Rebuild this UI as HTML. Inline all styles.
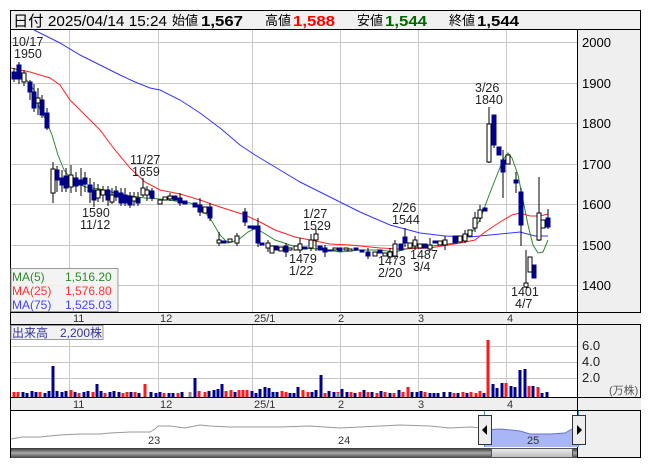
<!DOCTYPE html>
<html><head><meta charset="utf-8"><style>
body{margin:0;background:#fff;width:653px;height:470px;overflow:hidden;font-family:"Liberation Sans","Noto Sans CJK JP",sans-serif}
svg{position:absolute;left:0;top:0}
text{font-family:"Liberation Sans","Noto Sans CJK JP",sans-serif}
</style></head><body>
<svg width="653" height="470" viewBox="0 0 653 470" xmlns="http://www.w3.org/2000/svg">
<!-- header -->
<rect x="10.5" y="10.5" width="630" height="19" fill="#f0f0f0" stroke="#000"/>
<g font-size="15" fill="#000">
<text x="13" y="26" textLength="154" lengthAdjust="spacingAndGlyphs">日付 2025/04/14 15:24</text>
<text x="172" y="25" font-size="13" textLength="26" lengthAdjust="spacingAndGlyphs">始値</text><text x="201" y="26" font-weight="bold" textLength="42" lengthAdjust="spacingAndGlyphs">1,567</text>
<text x="265" y="25" font-size="13" textLength="26" lengthAdjust="spacingAndGlyphs">高値</text><text x="293" y="26" font-weight="bold" fill="#ff0000" textLength="42" lengthAdjust="spacingAndGlyphs">1,588</text>
<text x="357" y="25" font-size="13" textLength="26" lengthAdjust="spacingAndGlyphs">安値</text><text x="385" y="26" font-weight="bold" fill="#006600" textLength="42" lengthAdjust="spacingAndGlyphs">1,544</text>
<text x="449" y="25" font-size="13" textLength="26" lengthAdjust="spacingAndGlyphs">終値</text><text x="477" y="26" font-weight="bold" textLength="42" lengthAdjust="spacingAndGlyphs">1,544</text>
</g>
<!-- main panel -->
<rect x="10.5" y="29.5" width="630" height="428" fill="#fff" stroke="#000"/>
<rect x="578" y="30" width="62" height="427" fill="#efefef"/>
<line x1="577.5" y1="30" x2="577.5" y2="458" stroke="#000"/>
<g stroke="#c8c8c8" stroke-width="1">
<line x1="11" y1="42.5" x2="577" y2="42.5"/><line x1="11" y1="83.5" x2="577" y2="83.5"/><line x1="11" y1="123.5" x2="577" y2="123.5"/><line x1="11" y1="164.5" x2="577" y2="164.5"/><line x1="11" y1="204.5" x2="577" y2="204.5"/><line x1="11" y1="245.5" x2="577" y2="245.5"/><line x1="11" y1="285.5" x2="577" y2="285.5"/>
<line x1="69.5" y1="30" x2="69.5" y2="312"/><line x1="158.5" y1="30" x2="158.5" y2="312"/><line x1="252.5" y1="30" x2="252.5" y2="312"/><line x1="340.5" y1="30" x2="340.5" y2="312"/><line x1="418.5" y1="30" x2="418.5" y2="312"/><line x1="506.5" y1="30" x2="506.5" y2="312"/>
<line x1="11" y1="346.5" x2="577" y2="346.5"/><line x1="11" y1="362.5" x2="577" y2="362.5"/><line x1="11" y1="378.5" x2="577" y2="378.5"/>
<line x1="69.5" y1="325" x2="69.5" y2="397"/><line x1="158.5" y1="325" x2="158.5" y2="397"/><line x1="252.5" y1="325" x2="252.5" y2="397"/><line x1="340.5" y1="325" x2="340.5" y2="397"/><line x1="418.5" y1="325" x2="418.5" y2="397"/><line x1="506.5" y1="325" x2="506.5" y2="397"/>
</g>
<g font-size="13" fill="#000">
<text x="582" y="47">2000</text><text x="582" y="88">1900</text><text x="582" y="128">1800</text><text x="582" y="169">1700</text><text x="582" y="209">1600</text><text x="582" y="250">1500</text><text x="582" y="290">1400</text>
</g>
<!-- date strips -->
<rect x="11" y="312" width="630" height="13" fill="#efefef"/>
<line x1="11" y1="312.5" x2="641" y2="312.5" stroke="#000"/><line x1="11" y1="324.5" x2="641" y2="324.5" stroke="#000"/>
<rect x="11" y="397" width="630" height="13" fill="#efefef"/>
<line x1="11" y1="397.5" x2="641" y2="397.5" stroke="#000"/><line x1="11" y1="410.5" x2="641" y2="410.5" stroke="#000"/>
<rect x="578" y="325" width="62" height="72" fill="#efefef"/>
<line x1="577.5" y1="312" x2="577.5" y2="458" stroke="#000"/>
<g font-size="11" fill="#333">
<text x="73" y="322">11</text><text x="160" y="322">12</text><text x="254" y="322">25/1</text><text x="338" y="322">2</text><text x="418" y="322">3</text><text x="507" y="322">4</text>
<text x="73" y="408">11</text><text x="160" y="408">12</text><text x="254" y="408">25/1</text><text x="338" y="408">2</text><text x="418" y="408">3</text><text x="507" y="408">4</text>
</g>
<g font-size="13" fill="#222"><text x="582" y="350">6.0</text><text x="582" y="366">4.0</text><text x="582" y="382">2.0</text></g>
<text x="609" y="394" font-size="11" fill="#555">(万株)</text>
<!-- MAs -->
<polyline fill="none" stroke="#3333ff" stroke-width="1" points="34,30 60,43 80,55 100,65 120,75 135,82 150,88 160,90 180,100 200,113 220,128 240,145 255,155 280,170 300,182 330,197 360,212 390,225 420,233 445,236 470,237 500,234 520,232 535,236 548,236"/>
<polyline fill="none" stroke="#ff2222" stroke-width="1" points="11,68 30,72 50,78 60,85 70,100 85,115 100,130 115,150 130,168 145,182 160,190 180,194 200,200 220,207 245,215 260,222 275,230 295,237 310,240 330,244 350,245 380,248 400,249 430,248 460,243 475,240 485,232 500,222 512,215 520,213 530,216 540,216 548,214"/>
<polyline fill="none" stroke="#2b8a2b" stroke-width="1" points="14,68 22,74 28,82 34,90 40,110 46,120 52,135 58,155 64,170 72,180 85,187 100,189 115,193 130,196 145,198 160,199 175,201 190,203 200,207 210,218 220,235 228,243 238,240 248,232 256,228 262,232 275,240 290,245 300,248 320,249 340,252 360,250 380,250 395,252 410,248 425,247 440,245 455,243 465,240 472,232 480,220 488,198 495,180 503,160 508,153 512,158 518,175 523,200 528,225 533,245 538,253 543,252 548,240"/>
<!-- candles -->
<g stroke="#000" stroke-width="1">
<path d="M14,68V82M19,62V84M24,70V86M30,80V100M34,84V112M38,88V115M42,95V118M47,108V130M53,162V203M57,166V192M62,170V192M66,168V192M71,165V193M76,172V192M81,168V196M85,172V192M90,178V203M94,182V207M98,184V202M103,186V202M108,186V206M112,188V204M116,186V201M121,188V206M125,188V206M130,192V208M134,192V206M138,192V206M143,178V197M147,186V201M152,188V201M170,193V201M180,193V206M200,198V216M210,203V221M219,232V246M237,233V246M245,208V226M258,218V247M268,240V252M286,243V257M300,238V253M311,234V251M316,229V251M325,245V257M368,248V259M390,248V260M395,240V259M405,228V247M415,236V250M430,238V251M445,236V250M465,230V243M475,212V232M480,205V222M489,107V163M494,115V148M503,150V198M516,172V193M521,188V246M526,250V288M539,177V241M548,209V229"/>
</g>
<g fill="#00008b" stroke="#00008b" stroke-width="1">
<rect x="12" y="72" width="4" height="7"/><rect x="17" y="65" width="4" height="14"/><rect x="28" y="82" width="4" height="10"/><rect x="32" y="92" width="4" height="16"/><rect x="40" y="100" width="4" height="15"/><rect x="45" y="113" width="4" height="15"/>
<rect x="55" y="170" width="4" height="10"/><rect x="60" y="178" width="4" height="7"/><rect x="64" y="176" width="4" height="12"/><rect x="74" y="178" width="4" height="8"/><rect x="79" y="180" width="4" height="5"/><rect x="83" y="178" width="4" height="6"/><rect x="88" y="185" width="4" height="7"/><rect x="92" y="190" width="4" height="10"/><rect x="106" y="190" width="4" height="10"/><rect x="114" y="191" width="4" height="6"/><rect x="119" y="193" width="4" height="10"/><rect x="123" y="195" width="4" height="8"/><rect x="128" y="196" width="4" height="9"/><rect x="136" y="198" width="4" height="5"/><rect x="150" y="191" width="4" height="7"/>
<rect x="173" y="196" width="4" height="4"/><rect x="178" y="198" width="4" height="5"/><rect x="183" y="201" width="4" height="3"/><rect x="193" y="203" width="4" height="4"/><rect x="198" y="205" width="4" height="7"/><rect x="208" y="207" width="4" height="11"/><rect x="222" y="241" width="4" height="2"/><rect x="243" y="212" width="4" height="10"/><rect x="248" y="226" width="4" height="2"/><rect x="252" y="226" width="4" height="3"/><rect x="256" y="226" width="4" height="17"/><rect x="260" y="243" width="4" height="2"/><rect x="274" y="246" width="4" height="4"/><rect x="284" y="246" width="4" height="6"/><rect x="303" y="247" width="4" height="2"/><rect x="318" y="246" width="4" height="4"/><rect x="323" y="248" width="4" height="4"/><rect x="328" y="250" width="4" height="1"/><rect x="338" y="248" width="4" height="3"/><rect x="354" y="248" width="4" height="2"/><rect x="360" y="250" width="4" height="2"/><rect x="366" y="252" width="4" height="4"/><rect x="378" y="250" width="4" height="3"/><rect x="399" y="244" width="4" height="6"/><rect x="403" y="237" width="4" height="6"/><rect x="423" y="244" width="4" height="4"/><rect x="433" y="241" width="4" height="2"/><rect x="453" y="236" width="4" height="7"/><rect x="483" y="208" width="4" height="3"/>
<rect x="492" y="115" width="4" height="30"/><rect x="497" y="147" width="4" height="8"/><rect x="501" y="160" width="4" height="12"/><rect x="514" y="180" width="4" height="3"/><rect x="519" y="192" width="4" height="33"/><rect x="532" y="265" width="4" height="13"/><rect x="546" y="218" width="4" height="9"/>
</g>
<g fill="#fff" stroke="#000" stroke-width="1">
<rect x="22" y="73" width="4" height="9"/><rect x="36" y="98" width="4" height="5"/><rect x="51" y="169" width="4" height="24"/><rect x="69" y="175" width="4" height="12"/><rect x="96" y="190" width="4" height="8"/><rect x="101" y="190" width="4" height="5"/><rect x="110" y="195" width="4" height="7"/><rect x="132" y="197" width="4" height="4"/><rect x="141" y="188" width="4" height="7"/><rect x="145" y="190" width="4" height="5"/><rect x="158" y="200" width="4" height="4"/><rect x="163" y="197" width="4" height="3"/><rect x="168" y="196" width="4" height="3"/><rect x="203" y="207" width="4" height="6"/><rect x="217" y="240" width="4" height="3"/><rect x="228" y="239" width="4" height="3"/><rect x="235" y="236" width="4" height="7"/><rect x="266" y="243" width="4" height="5"/><rect x="270" y="246" width="4" height="7"/><rect x="279" y="247" width="4" height="4"/><rect x="288" y="248" width="4" height="2"/><rect x="294" y="246" width="4" height="4"/><rect x="298" y="244" width="4" height="6"/><rect x="309" y="240" width="4" height="8"/><rect x="314" y="234" width="4" height="6"/><rect x="333" y="248" width="4" height="2"/><rect x="344" y="248" width="4" height="2"/><rect x="348" y="249" width="4" height="2"/><rect x="373" y="252" width="4" height="4"/><rect x="383" y="253" width="4" height="3"/><rect x="388" y="252" width="4" height="5"/><rect x="393" y="244" width="4" height="12"/><rect x="408" y="243" width="4" height="5"/><rect x="413" y="240" width="4" height="6"/><rect x="418" y="244" width="4" height="4"/><rect x="428" y="245" width="4" height="4"/><rect x="438" y="241" width="4" height="4"/><rect x="443" y="240" width="4" height="5"/><rect x="458" y="236" width="4" height="6"/><rect x="463" y="234" width="4" height="7"/><rect x="468" y="230" width="4" height="6"/><rect x="473" y="218" width="4" height="10"/><rect x="478" y="210" width="4" height="8"/>
<rect x="487" y="124" width="4" height="38"/><rect x="506" y="155" width="4" height="9"/><rect x="524" y="283" width="4" height="4"/><rect x="528" y="257" width="4" height="15"/><rect x="537" y="213" width="4" height="27"/><rect x="541" y="220" width="4" height="8"/>
</g>
<!-- annotations -->
<g font-size="12.5" fill="#222">
<text x="12" y="46">10/17</text><text x="14" y="58">1950</text>
<text x="130" y="164">11/27</text><text x="132" y="176">1659</text>
<text x="82" y="217">1590</text><text x="80" y="229">11/12</text>
<text x="303" y="218">1/27</text><text x="303" y="230">1529</text>
<text x="289" y="263">1479</text><text x="289" y="275">1/22</text>
<text x="392" y="212">2/26</text><text x="392" y="224">1544</text>
<text x="378" y="265">1473</text><text x="378" y="277">2/20</text>
<text x="410" y="259">1487</text><text x="413" y="271">3/4</text>
<text x="475" y="92">3/26</text><text x="475" y="104">1840</text>
<text x="511" y="296">1401</text><text x="515" y="308">4/7</text>
</g>
<!-- MA legend -->
<rect x="11" y="268.5" width="107" height="43" fill="#f2f2f2" fill-opacity="0.9" stroke="#999"/>
<g font-size="12">
<text x="12" y="281" fill="#2b8a2b">MA(5)</text><text x="65" y="281" fill="#2b8a2b">1,516.20</text>
<text x="12" y="295" fill="#ff3333">MA(25)</text><text x="65" y="295" fill="#ff3333">1,576.80</text>
<text x="12" y="309" fill="#4444ff">MA(75)</text><text x="65" y="309" fill="#4444ff">1,525.03</text>
</g>
<rect x="11" y="325.5" width="92" height="14" fill="#f2f2f2" stroke="#999"/>
<text x="12" y="337" font-size="12" fill="#333399">出来高　2,200株</text>
<!-- volume -->
<path fill="none" stroke="#00008b" stroke-width="3" d="M23,397v-5M27,397v-4M32,397v-6M36,397v-5M45,397v-4M49,397v-6M53,397v-31M57,397v-6M62,397v-5M66,397v-6M75,397v-5M84,397v-5M88,397v-6M97,397v-13M101,397v-6M110,397v-5M114,397v-6M119,397v-5M131,397v-5M139,397v-4M151,397v-5M156,397v-4M160,397v-5M169,397v-4M173,397v-4M182,397v-5M195,397v-19M209,397v-6M214,397v-7M218,397v-8M222,397v-13M235,397v-5M252,397v-6M256,397v-4M260,397v-8M265,397v-10M269,397v-9M273,397v-5M277,397v-5M290,397v-4M294,397v-4M298,397v-10M312,397v-5M316,397v-7M321,397v-22M329,397v-6M334,397v-5M342,397v-8M347,397v-5M355,397v-4M364,397v-7M372,397v-5M381,397v-6M390,397v-4M399,397v-7M412,397v-5M417,397v-5M421,397v-6M430,397v-4M434,397v-4M438,397v-4M444,397v-5M450,397v-5M458,397v-4M467,397v-4M484,397v-4M493,397v-13M497,397v-9M502,397v-14M511,397v-11M515,397v-10M520,397v-27M525,397v-28M533,397v-11M542,397v-4M547,397v-5"/>
<path fill="none" stroke="#ff1a1a" stroke-width="3" d="M14,397v-5M18,397v-5M40,397v-5M71,397v-7M79,397v-4M93,397v-5M105,397v-4M123,397v-4M127,397v-5M135,397v-5M145,397v-13M164,397v-4M178,397v-4M199,397v-6M205,397v-5M226,397v-6M231,397v-7M239,397v-7M243,397v-7M247,397v-7M282,397v-6M286,397v-5M303,397v-7M308,397v-5M325,397v-4M338,397v-5M351,397v-5M360,397v-5M368,397v-5M377,397v-4M385,397v-5M394,397v-4M403,397v-5M408,397v-10M425,397v-5M454,397v-4M463,397v-5M471,397v-5M476,397v-4M480,397v-6M488,397v-57M506,397v-14M529,397v-11M538,397v-10"/>
<path fill="none" stroke="#888" stroke-width="3" d="M190,397v-5M338,397v-4"/>
<!-- navigator -->
<polyline fill="none" stroke="#999" stroke-width="1" points="11,439 22,437 40,437 60,435 80,434 100,434 110,433 130,432 150,432 155,429 158,426 170,426 185,428 200,425 210,426 230,427 250,427 280,427 310,426 340,428 360,427 380,426 400,425 430,426 450,428 470,427 483,428"/>
<path d="M484,430 L500,429 L520,431 L530,434 L550,434 L565,433 L572,429 L578,429 L578,447 L484,447 Z" fill="#a8b6f5"/>
<polyline fill="none" stroke="#6a72c8" stroke-width="1" points="484,430 500,429 520,431 530,434 550,434 565,433 572,429 578,429"/>
<text x="148" y="444" font-size="11" fill="#333">23</text>
<text x="338" y="444" font-size="11" fill="#333">24</text>
<text x="527" y="444" font-size="11" fill="#333">25</text>
<line x1="484.5" y1="411" x2="484.5" y2="447" stroke="#3aa0d0"/><line x1="578.5" y1="411" x2="578.5" y2="447" stroke="#3aa0d0"/>
<defs><linearGradient id="sb" x1="0" y1="0" x2="0" y2="1"><stop offset="0" stop-color="#333"/><stop offset="0.5" stop-color="#aaa"/><stop offset="1" stop-color="#444"/></linearGradient>
<linearGradient id="th" x1="0" y1="0" x2="0" y2="1"><stop offset="0" stop-color="#eee"/><stop offset="1" stop-color="#bbb"/></linearGradient></defs>
<rect x="11" y="448" width="566" height="10" fill="url(#sb)"/>
<rect x="491.5" y="448.5" width="81" height="9" fill="url(#th)" stroke="#555"/>
<rect x="478.5" y="415.5" width="13" height="29" fill="#eee" stroke="#333"/>
<path d="M487,425 L482,430 L487,435 Z" fill="#000"/>
<rect x="572.5" y="415.5" width="13" height="29" fill="#eee" stroke="#333"/>
<path d="M577,425 L582,430 L577,435 Z" fill="#000"/>
</svg>
</body></html>
